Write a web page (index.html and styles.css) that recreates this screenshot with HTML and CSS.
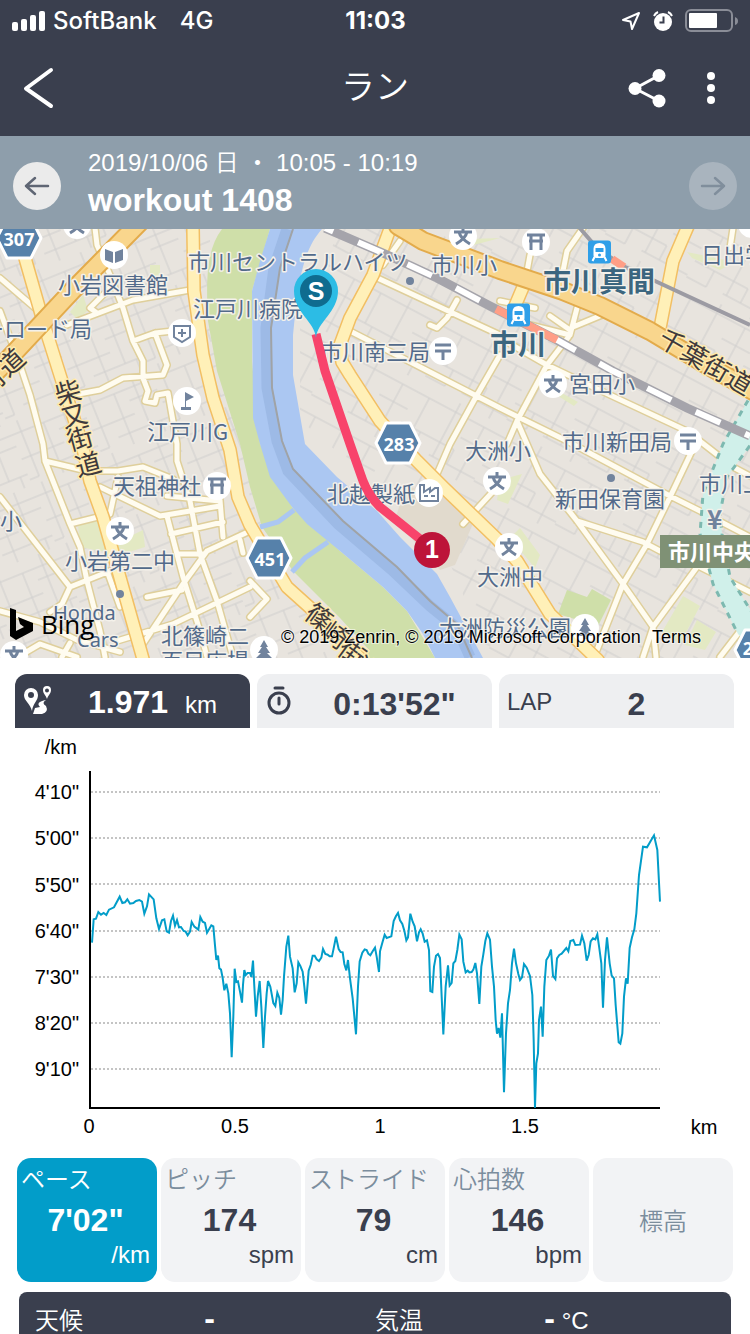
FILE: index.html
```html
<!DOCTYPE html>
<html lang="ja">
<head>
<meta charset="utf-8">
<meta name="viewport" content="width=device-width, initial-scale=1">
<title>ラン</title>
<link rel="stylesheet" href="styles.css">
</head>
<body>
<header class="top">
  <div class="status">
    <div class="status-left">
      <svg width="34" height="20" viewBox="0 0 34 20" fill="#fff"><rect x="0" y="11" width="6" height="9" rx="2"/><rect x="9" y="8" width="6" height="12" rx="2"/><rect x="18" y="4" width="6" height="16" rx="2"/><rect x="27" y="0" width="6" height="20" rx="2"/></svg>
      <span class="carrier">SoftBank</span><span>4G</span>
    </div>
    <div class="clock">11:03</div>
    <div class="status-right">
      <svg width="20" height="20" viewBox="0 0 20 20" fill="none" stroke="#fff" stroke-width="2" stroke-linejoin="round"><path d="M18 2 11 18 9.500 10.500 2 9Z"/></svg>
      <svg width="20" height="20" viewBox="0 0 20 20"><circle cx="10" cy="11" r="9" fill="#fff"/><path d="M1 5A8 8 0 0 1 5 1M19 5A8 8 0 0 0 15 1" stroke="#fff" stroke-width="2" fill="none"/><path d="M10.500 5.500V11.500H6.500" stroke="#3a3f4e" stroke-width="2" fill="none"/></svg>
      <svg width="54" height="24" viewBox="0 0 54 24"><rect x="1" y="1" width="46" height="21" rx="5" fill="none" stroke="#8a8d97" stroke-width="2"/><rect x="4" y="4" width="28" height="15" rx="1" fill="#fff"/><path d="M50 8q3 1 3 4t-3 4z" fill="#8a8d97"/></svg>
    </div>
  </div>
  <nav class="nav">
    <button class="icon-btn" aria-label="戻る"><svg width="32" height="42" viewBox="0 0 32 42" fill="none" stroke="#fff" stroke-width="4" stroke-linecap="round" stroke-linejoin="round"><path d="M29 3 4 21.500 29 39"/></svg></button>
    <h1 class="nav-title">ラン</h1>
    <div class="nav-actions">
      <button class="icon-btn" aria-label="共有"><svg width="38" height="40" viewBox="0 0 38 40"><path d="M31 7.500 7 20.500 31 33" fill="none" stroke="#fff" stroke-width="3"/><g fill="#fff"><circle cx="31" cy="7.500" r="6.500"/><circle cx="7" cy="20.500" r="6.500"/><circle cx="31" cy="33" r="6.500"/></g></svg></button>
      <button class="icon-btn" aria-label="メニュー"><svg width="8" height="34" viewBox="0 0 8 34" fill="#fff"><circle cx="4" cy="5" r="4"/><circle cx="4" cy="17" r="4"/><circle cx="4" cy="29" r="4"/></svg></button>
    </div>
  </nav>
</header>

<section class="workout">
  <button class="round" aria-label="前へ"><svg width="26" height="20" viewBox="0 0 26 20" fill="none" stroke="#5f6674" stroke-width="2.500" stroke-linecap="round" stroke-linejoin="round"><path d="M24 10H2M11 2 2 10 11 18"/></svg></button>
  <div class="workout-text">
    <p class="workout-date">2019/10/06 日 ・ 10:05 - 10:19</p>
    <h2 class="workout-name">workout 1408</h2>
  </div>
  <button class="round round-off" aria-label="次へ" disabled><svg width="26" height="20" viewBox="0 0 26 20" fill="none" stroke="#808e9c" stroke-width="2.500" stroke-linecap="round" stroke-linejoin="round"><path d="M2 10H24M15 2 24 10 15 18"/></svg></button>
</section>

<svg class="map" viewBox="0 229 750 429" role="img" aria-label="地図">
  <defs>
    <pattern id="west" width="76" height="66" patternUnits="userSpaceOnUse" patternTransform="rotate(-22)"><path d="M0 12H76M0 38H46M22 54H76M10 0V38M34 12V66M56 0V54M68 54V66M0 60H10V38M46 24H76"/></pattern>
    <pattern id="east" width="92" height="70" patternUnits="userSpaceOnUse" patternTransform="rotate(28)"><path d="M0 10H92M0 44H60M40 60H92M14 10V44M44 0V60M76 10V70M60 30H92M60 44V60M0 62H22V44"/></pattern>
    <g id="disc"><circle r="14" fill="#fff"/></g>
    <g id="school"><use href="#disc"/><path d="M-9-4H9M0-9V-4M-7 8C-2 5 3 1 4-4M7 8C2 5-3 1-4-4" class="ink"/></g>
    <g id="torii"><use href="#disc"/><path d="M-9-7H9M-7-1H7M-5-7V8M5-7V8" class="ink"/></g>
    <g id="post"><use href="#disc"/><path d="M-8-6H8M-8 0H8M0 0V9" class="ink"/></g>
    <g id="tree"><use href="#disc"/><path d="M0-10 4-3H2L6 3H3L8 8H2V11H-2V8H-8L-3 3H-6L-2-3H-4Z" fill="#71839d"/></g>
    <g id="hex"><path d="M-12-20H12L22 0 12 20H-12L-22 0Z" fill="#5681aa" stroke="#fff" stroke-width="3" stroke-linejoin="round"/></g>
    <g id="train"><rect x="-11.500" y="-11.500" width="23" height="23" rx="3" fill="#2f9fe8"/><path d="M-5 5 -7 9M5 5 7 9" stroke="#fff" stroke-width="2"/><path d="M-6 3V-3Q-6-9 0-9T6-3V3Q6 6 3 6H-3Q-6 6-6 3Z" fill="#fff"/><path d="M-4-4H4V0H-4Z" fill="#2f9fe8"/><circle cy="3" r="1.500" fill="#2f9fe8"/></g>
    <path id="lanes" d="M0 278 35 308M0 311 20 365 30 395 43 444 45 461 70 524 80 547 87 581 100 631 105 657M95 228 97 245 110 275 123 308 133 341 143 361 143 378 148 391 145 401 155 403 157 395 168 393 177 444 177 461 190 501 200 554 217 601 233 657M67 325 133 300 190 290M133 341 155 333 173 331M155 333 167 365 163 375 123 378 100 390 73 395M110 288 90 308 97 313M45 461 87 471 118 471 143 467 173 479M100 487 160 516 220 506M167 516 183 577 200 631 207 657M70 524 110 514 118 477M0 497 70 587 110 571M70 587 62 604 50 612M0 611 40 622 77 640 120 652M18 657 40 644 77 657M62 657 70 643M117 641 173 624 250 587M143 644 183 584 207 551 250 531M147 597 182 590M171 534 223 522M177 554 203 554M220 500 223 537M107 571 120 607M167 496 220 501M240 540 243 553M373 276 500 335M350 331 500 408M457 300 447 318 437 328 430 325M500 355 477 395 450 444 437 474M400 241 383 265M500 408 567 441 670 496 700 511 750 537M577 308 570 335 547 365 517 421 507 444M500 301 535 308M550 316 570 330M530 325 570 335M602 315 573 327M500 338 547 365 610 395 687 431 733 467 750 476M583 228 567 251 563 271M530 255 524 288M733 228 730 248M517 421 527 444 540 474 577 521 623 584 653 627 643 657M692 451 670 497 647 544 623 584 597 650M577 521 643 542 660 551M697 567 653 627 656 657M700 567 750 592M740 631 720 657M497 487 463 524M250 581 267 599 250 617"/>
    <path id="avenues" d="M25 258 43 321 60 375 82 444 90 481 103 517 117 567 143 659M193 228 194 291 203 355 213 398 230 450 238 497 250 525 287 587 317 614 362 660M391 226 373 275 350 318 340 345 342 362 350 375 380 421 417 461 443 487 497 539 517 561 550 614 598 660M688 226 673 261 660 328M526 280 515 306"/>
    <path id="highways" d="M142 220 72 291 0 368-10 378M398 226 423 241 500 270 563 291 600 306 650 331 700 361 760 395"/>
  </defs>
  <rect y="229" width="750" height="429" fill="#e8e4de"/>
  <path d="M0 229H210V300L240 444 290 580 370 658H0Z" fill="url(#west)"/>
  <path d="M340 229H750V658H490L440 540 300 420V320Z" fill="url(#east)"/>
  <path d="M78 524 103 517 118 542 143 530 145 547 120 555 80 547ZM150 265H160V290H150ZM70 312 83 295 88 310 78 320ZM500 480 522 474 508 504 497 500ZM510 538 520 528 540 555 535 568ZM440 240 500 238 455 250ZM687 252 735 262 720 270 692 258ZM683 596 700 606 680 644 662 632ZM697 620 716 632 705 650 685 645ZM560 392 578 402 574 406 558 396Z" fill="#e3e9c3"/>
  <path d="M222 229C206 250 206 280 208 321L217 371 240 444 250 487 262 527 293 571 340 618 370 651 340 658H435L407 611 383 587 340 551 292 507 260 444 252 361V291L270 229ZM567 590 587 597 592 589 611 600 598 626 558 614Z" fill="#cfdfa9"/>
  <path d="M405 488 443 487 475 519 455 565 440 570 395 520Z" fill="#e1dacd"/>
  <path d="M322 229C308 245 303 262 297 295L293 335V375L305 444 337 477 377 511 400 537 437 574 450 597 483 658H435L423 634 407 611 383 587 340 551 307 524 292 507 270 477 260 444 253 418 252 291 260 261 270 229Z" fill="#abc7f2"/>
  <path d="M287 229 274 268 266 328 267 388 277 441 288 471 338 524 392 570 430 606 457 628 470 657" fill="none" stroke="#9dbae6" stroke-width="11"/>
  <path d="M293 229 280 268 271 328 272 388 282 441 293 469 343 521 397 567 430 601 457 624 472 658" fill="none" stroke="#a0a3a6" stroke-width="2"/>
  <path d="M260 527 278 522 294 510M292 572 305 558 328 542" fill="none" stroke="#abc7f2" stroke-width="5"/>
  <g class="roads">
    <use href="#lanes" stroke="#dfcf9b" stroke-width="8"/><use href="#lanes" stroke="#fffcf0" stroke-width="5"/>
  </g>
  <path d="M754 390 723 444 703 494 700 534 713 584 738 634 754 650V616L730 577 722 534 720 514 727 477 754 440Z" fill="#d0f0ea"/>
  <path d="M754 390 723 444 703 494 700 534 713 584 738 634M754 616 730 577 722 534 720 514 727 477 754 440" fill="none" stroke="#7db9b0" stroke-width="3" stroke-dasharray="6 6"/>
  <g class="roads">
    <use href="#avenues" stroke="#f2bf63" stroke-width="14"/><use href="#avenues" stroke="#fff0b8" stroke-width="11"/>
    <use href="#highways" stroke="#e3ab4b" stroke-width="20"/><use href="#highways" stroke="#f9d68d" stroke-width="16"/>
  </g>
  <g fill="none">
    <path d="M578 226 597 248 623 266 655 281 750 325" stroke="#9c9ba3" stroke-width="4"/>
    <path d="M325 228 383 253 437 278 490 306 557 340 613 371 687 408 750 436" stroke="#a5a4ab" stroke-width="9"/>
    <path d="M325 228 383 253 437 278 490 306 557 340 613 371 687 408 750 436" stroke="#fff" stroke-width="6" stroke-dasharray="27 27" stroke-dashoffset="18"/>
    <path d="M496 309 557 340M612 259 624 267" stroke="#ff9e86" stroke-width="8"/>
  </g>

  <g class="poi">
    <use href="#school" x="77" y="225"/><use href="#school" x="120" y="531"/><use href="#school" x="14" y="655"/><use href="#school" x="463" y="236"/><use href="#school" x="553" y="384"/><use href="#school" x="497" y="481"/><use href="#school" x="509" y="547"/><use href="#disc" x="752" y="224"/>
    <use href="#torii" x="217" y="486"/><use href="#torii" x="536" y="242"/><use href="#post" x="443" y="351"/><use href="#post" x="688" y="441"/><use href="#tree" x="264" y="650"/><use href="#tree" x="585" y="628"/>
    <g transform="translate(114 255)"><use href="#disc"/><path d="M-9-6 -1-3V8L-9 5ZM9-6 1-3V8L9 5Z" fill="#71839d"/></g>
    <g transform="translate(182 333)"><use href="#disc"/><path d="M-8-7H8V4L0 9-8 4ZM0-4V4M-4 0H4" class="ink thin"/></g>
    <g transform="translate(187 401)"><use href="#disc"/><path d="M-2-9 7-4-1 0V6H4V9H-6V6H-2Z" fill="#71839d"/></g>
    <g transform="translate(429 493)"><use href="#disc"/><path d="M-9 8V-8H-5V-1L1-5V-1L6-5H9V8ZM-5 3H-1M2 3H6" class="ink thin"/></g>
    <g fill="#71839d"><circle cx="410" cy="281" r="4"/><circle cx="120" cy="594" r="4"/><circle cx="611" cy="478" r="4"/></g>
    <use href="#train" x="599.500" y="252"/><use href="#train" x="518.500" y="315"/>
  </g>

  <g class="place">
    <text x="58" y="293">小岩図書館</text><text x="188" y="270">市川セントラルハイツ</text><text x="193" y="317">江戸川病院</text><text x="92" y="337" text-anchor="end">ーロード局</text><text x="431" y="273">市川小</text><text x="701" y="263">日出学</text><text x="320" y="360">市川南三局</text><text x="569" y="392">宮田小</text><text x="562" y="450">市川新田局</text><text x="465" y="459">大洲小</text><text x="147" y="440">江戸川G</text><text x="113" y="494">天祖神社</text><text x="65" y="569">小岩第二中</text><text x="555" y="507">新田保育園</text><text x="327" y="502">北越製紙</text><text x="699" y="492">市川工</text><text x="477" y="585">大洲中</text><text x="439" y="636">大洲防災公園</text><text x="161" y="644">北篠崎二</text><text x="161" y="669">百目広場</text><text x="22" y="529" text-anchor="end">一小</text><text x="707" y="529" class="yen">¥</text>
    <text x="53" y="620" class="latin">Honda</text><text x="77" y="647" class="latin">Cars</text>
  </g>
  <g class="station"><text x="543" y="292">市川真間</text><text x="490" y="355">市川</text></g>
  <g class="road-name">
    <text transform="translate(656 344) rotate(30)">千葉街道</text>
    <text x="58 64 70 78" y="405 428 451 477" rotate="-15">柴又街道</text>
    <text x="303 319 336 352" y="617 635 653 670" rotate="36">篠崎街道</text>
    <text x="-12 8" y="397 378" rotate="-42">街道</text>
  </g>
  <rect x="660" y="535" width="92" height="33" fill="#7f9175"/><text x="668" y="560" class="plate">市川中央</text>
  <g class="shield">
    <use href="#hex" x="19" y="238"/><use href="#hex" x="398" y="443"/><use href="#hex" x="269" y="558"/><use href="#hex" x="757" y="650"/>
    <text x="19" y="246">307</text><text x="399" y="451">283</text><text x="270" y="566">451</text><text x="748" y="655">2</text>
  </g>

  <path d="M316 334 325 371 350 444 363 481Q369 496 380 507L420 539 432 549" fill="none" stroke="#f8436b" stroke-width="9"/>
  <path d="M316 338C315 322 294 312 294 291A22 22 0 0 1 338 291C338 312 317 322 316 338Z" fill="#2cbce5"/>
  <circle cx="316" cy="291" r="16" fill="#0f6c8f"/><circle cx="432" cy="550" r="18" fill="#bd1439"/>
  <g class="marker"><text x="316" y="300">S</text><text x="432" y="558">1</text></g>

  <path d="M10 608 16 610V631L24 627 20 624 18 617 33 623V631L16 640 10 636Z"/>
  <text x="41" y="634" class="bing">Bing</text>
  <text x="281" y="643" class="credit">© 2019 Zenrin, © 2019 Microsoft Corporation</text>
  <a href="#terms"><text x="652" y="643" class="credit">Terms</text></a>
</svg>

<main class="details">
  <div class="tabs">
    <button class="tab tab-on"><svg class="tab-icon" width="30" height="30" viewBox="0 0 30 30" aria-label="距離"><path d="M8 2a7 7 0 0 1 7 7c0 6-5 8-6 16C7 17 1 15 1 9a7 7 0 0 1 7-7zm0 4a3 3 0 1 0 0 6 3 3 0 0 0 0-6zM24 0a4 4 0 0 1 4 4c0 4-3 5-4 9-1-4-4-5-4-9a4 4 0 0 1 4-4zm0 2.500a2 2 0 1 0 0 4 2 2 0 0 0 0-4z" fill="#fff" fill-rule="evenodd"/><path d="M10 28 12 22 17 21Q12 16 23 14 18 17 23 20 26 26 19 28Z" fill="#fff"/></svg><span class="tab-value">1.971 <small>km</small></span></button>
    <button class="tab"><svg class="tab-icon" width="30" height="30" viewBox="0 0 30 30" fill="none" stroke="#3a3f4e" stroke-width="3" aria-label="時間"><circle cx="14" cy="17" r="10"/><path d="M14 12V18M10 2H18" stroke-linecap="round"/></svg><span class="tab-value">0:13'52"</span></button>
    <button class="tab"><span class="tab-label">LAP</span><span class="tab-value">2</span></button>
  </div>

  <svg class="chart" viewBox="0 728 750 430" role="img" aria-label="ペースのグラフ">
    <path d="M91 792H660M91 838H660M91 884H660M91 931H660M91 977H660M91 1023H660M91 1069H660" class="grid"/>
    <path d="M90 771V1108H660" class="axis"/>
    <g class="ticks"><g text-anchor="end"><text x="77" y="754">/km</text><text x="79" y="799">4'10"</text><text x="79" y="845">5'00"</text><text x="79" y="892">5'50"</text><text x="79" y="938">6'40"</text><text x="79" y="984">7'30"</text><text x="79" y="1030">8'20"</text><text x="79" y="1076">9'10"</text></g>
    <g text-anchor="middle"><text x="89" y="1133">0</text><text x="235" y="1133">0.5</text><text x="380" y="1133">1</text><text x="525" y="1133">1.5</text><text x="704" y="1134">km</text></g></g>
    <g class="pace">
      <path transform="translate(80 820) scale(.33333)" d="M36 368 41 298 48 296 55 276 63 284 71 279 79 285 87 269 102 262 119 230 127 249 135 247 142 238 150 251 160 249 168 243 178 240 186 245 193 281 201 259 207 223 221 238 229 295 237 327 246 301 253 298 260 334 267 338 273 303 279 287 285 317 291 300 297 322 303 321 311 333 317 335 323 346 330 335 335 306 343 320 355 329 361 291 368 305 375 309 381 338 388 326 394 316 400 319 405 376 409 420 414 407 418 445 423 449 428 474 433 511 439 491 445 520 450 580 455 712 460 590 464 446 469 486 474 484 480 515 486 548 489 495 493 450 497 465 503 459 510 459 514 471 519 422 523 500 528 590 533 530 539 483 544 560 550 684 555 590 560 520 564 483 571 500 580 549 586 558 592 518 598 534 603 584 608 540 612 470 619 380 625 347 630 410 638 445 644 517 650 490 655 427 661 438 668 455 673 500 678 551 683 490 686 452 692 435 698 407 704 407 710 418 717 423 724 413 729 387 736 402 743 404 749 409 756 409 761 385 768 350 776 387 782 396 788 397 793 432 799 451 804 420 810 475 818 535 828 643 834 500 839 424 847 398 854 388 860 390 865 401 871 406 878 394 885 383 890 410 897 456"/>
      <path transform="translate(370 820) scale(.33333)" d="M27 456 30 394 37 368 44 344 50 354 64 349 71 303 78 288 84 279 90 301 97 312 103 332 109 361 114 352 121 281 128 305 134 319 141 364 147 337 152 328 158 341 164 365 171 361 177 390 181 513 187 516 192 440 198 407 204 402 210 414 215 530 220 643 227 500 234 436 239 497 245 489 250 430 256 423 262 390 268 344 275 358 280 425 287 457 293 452 298 457 305 456 310 449 316 429 321 460 328 552 334 440 340 403 346 363 352 340 360 359 366 440 372 500 377 600 381 641 386 624 391 653 396 580 402 817 408 640 414 550 420 510 426 430 432 386 438 430 445 462 450 480 456 472 462 432 470 443 480 468 487 525 491 660 495 863 499 730 504 700 507 600 513 560 518 650 523 500 529 420 537 407 543 389 549 468 556 477 561 415 568 405 575 401 589 384 595 394 601 363 610 360 616 375 630 374 636 347 643 370 650 422 656 405 662 364 669 355 676 358 682 343 688 385 694 430 699 563 705 420 711 352 719 430 725 467 732 475 737 555 746 667 751 671 757 640 762 530 768 475 773 491 779 384 786 352 793 328 799 280 807 165 819 80 831 82 852 46 862 90 870 245"/>
    </g>
  </svg>

  <div class="cards">
    <button class="card card-on"><span class="card-label">ペース</span><span class="card-value">7'02"</span><span class="card-unit">/km</span></button>
    <button class="card"><span class="card-label">ピッチ</span><span class="card-value">174</span><span class="card-unit">spm</span></button>
    <button class="card"><span class="card-label">ストライド</span><span class="card-value">79</span><span class="card-unit">cm</span></button>
    <button class="card"><span class="card-label">心拍数</span><span class="card-value">146</span><span class="card-unit">bpm</span></button>
    <button class="card card-empty"><span class="card-label">標高</span></button>
  </div>

  <dl class="weather">
    <dt>天候</dt><dd><b>-</b></dd>
    <dt>気温</dt><dd><b>-</b> °C</dd>
  </dl>
</main>
</body>
</html>
```
FILE: styles.css
```css
* { box-sizing: border-box; }
body {
  margin: 0;
  min-height: 100vh;
  display: flex;
  flex-direction: column;
  background: #fff;
  color: #3a3f4e;
  font-family: "Liberation Sans", "Noto Sans CJK JP", sans-serif;
}
h1, h2, p, dl, dd { margin: 0; font-weight: inherit; }
button { border: 0; padding: 0; background: none; color: inherit; font: inherit; }
svg { display: block; }

.top { background: #3a3f4e; color: #fff; }
.status {
  display: grid;
  grid-template-columns: 1fr auto 1fr;
  align-items: center;
  height: 40px;
  padding: 1px 11px 0 12px;
  font: 500 24px/28px Inter, sans-serif;
}
.status-left, .status-right { display: flex; align-items: center; }
.status-left { gap: 7px; }
.carrier { margin-right: 16px; }
.clock { font-weight: 700; }
.status-right { justify-content: flex-end; gap: 12px; }
.nav {
  display: grid;
  grid-template-columns: 1fr auto 1fr;
  align-items: center;
  height: 96px;
  padding: 0 22px;
}
.nav-title { padding-bottom: 2px; font-size: 34px; line-height: 44px; font-weight: 350; }
.nav-actions { display: flex; justify-content: flex-end; align-items: center; gap: 41px; padding-right: 13px; }
.icon-btn { justify-self: start; }

.workout {
  display: flex;
  align-items: center;
  gap: 27px;
  padding: 11px 13px 10px;
  background: #8e9eab;
  color: #fff;
}
.workout-text { flex: 1; }
.workout-date { font-size: 24px; line-height: 32px; font-weight: 350; }
.workout-name { padding-top: 2px; font-size: 32px; line-height: 38px; font-weight: 700; }
.round {
  display: grid;
  place-items: center;
  width: 48px;
  height: 48px;
  margin-top: 6px;
  border-radius: 50%;
  background: #ebebeb;
}
.round-off { background: #a9b4be; }

.map { width: 100%; height: auto; font-family: "Noto Sans CJK JP", sans-serif; }
pattern path { fill: none; stroke: #cfcecd; stroke-width: 1; }
.roads { fill: none; stroke-linejoin: round; stroke-linecap: round; }
.ink { fill: none; stroke: #71839d; stroke-width: 3; }
.thin { stroke-width: 2; }
.place, .station, .road-name { paint-order: stroke; stroke: #f4f1ea; stroke-width: 3px; stroke-linejoin: round; }
.place { fill: #526a8a; font-size: 22px; }
.latin { font-family: "Noto Sans", sans-serif; font-size: 20px; }
.yen { font-weight: 700; font-size: 26px; fill: #71839d; }
.station { fill: #3c667f; font-size: 28px; font-weight: 700; }
.road-name { fill: #3f3a3c; font-size: 26px; stroke: #ffeaac; }
.plate { fill: #fff; font-size: 22px; font-weight: 700; }
.shield { fill: #fff; font: 700 18px "Noto Sans", sans-serif; text-anchor: middle; }
.marker { fill: #fff; font: 700 25px "Liberation Sans", sans-serif; text-anchor: middle; }
.bing { font: 26px "Open Sans", sans-serif; }
.credit { font: 18px "Liberation Sans", sans-serif; paint-order: stroke; stroke: #ffffff88; stroke-width: 2px; }

.details { display: flex; flex-direction: column; flex: 1; }
.tabs {
  display: grid;
  grid-template-columns: repeat(3, 1fr);
  gap: 7px;
  padding: 16px 16px 0 15px;
}
.tab {
  display: flex;
  align-items: center;
  height: 54px;
  padding: 0 8px;
  border-radius: 12px 12px 0 0;
  background: #eeeff1;
}
.tab-on { background: #3a3f4e; color: #fff; }
.tab-icon, .tab-label { width: 30px; }
.tab-label { padding-top: 2px; font-size: 24px; line-height: 28px; }
.tab-value { flex: 1; padding: 5px 0 0 10px; font-size: 32px; line-height: 36px; font-weight: 700; text-align: center; }
.tab-value small { padding-left: 8px; font-size: 24px; font-weight: 400; }

.chart { width: 100%; height: auto; }
.grid { stroke: #c4c4c4; stroke-width: 2; stroke-dasharray: 2 2; }
.axis { fill: none; stroke: #000; stroke-width: 2; }
.ticks { fill: #000; font-size: 20px; }
.pace { fill: none; stroke: #029dc9; stroke-width: 6; stroke-linejoin: miter; }

.cards { display: grid; grid-template-columns: repeat(5, 1fr); gap: 4px; padding: 0 17px; }
.card {
  display: flex;
  flex-direction: column;
  height: 124px;
  padding: 6px 7px 0 4px;
  border-radius: 14px;
  background: #f2f3f5;
}
.card-label { color: #7b8d9d; font-size: 24px; line-height: 32px; font-weight: 350; text-align: left; }
.card-value { padding: 6px 0 2px; font-size: 32px; line-height: 36px; font-weight: 700; }
.card-unit { font-size: 24px; line-height: 30px; text-align: right; }
.card-on { background: #029dc9; color: #fff; }
.card-on .card-label { color: #fff; }
.card-empty { justify-content: center; align-items: center; padding: 4px 0 0; }

.weather {
  display: grid;
  grid-template-columns: 1fr 2fr 1fr 2fr;
  align-items: baseline;
  flex: 1;
  margin: 10px 19px 0;
  padding: 10px 16px 0;
  border-radius: 8px 8px 0 0;
  background: #3a3f4e;
  color: #fff;
  font-size: 24px;
  line-height: 32px;
}
.weather dt { font-weight: 350; }
.weather dd { padding-left: 56px; }
.weather b { font-size: 32px; }
```
